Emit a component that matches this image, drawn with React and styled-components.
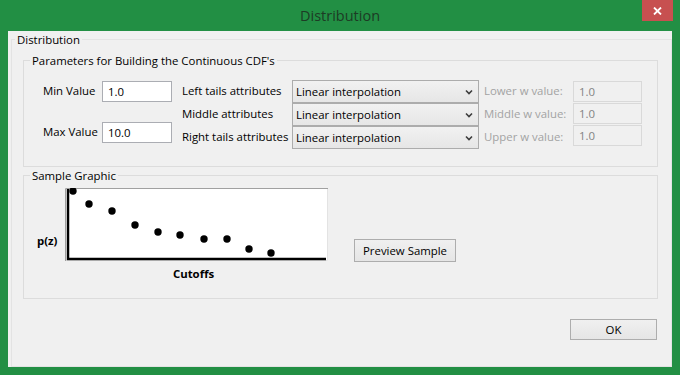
import React from "react";
import styled, { createGlobalStyle } from "styled-components";

const GlobalStyle = createGlobalStyle`
  html, body {
    margin: 0;
    padding: 0;
    background: #228f44;
  }
  body {
    font-family: "Segoe UI", "Open Sans", "Noto Sans", sans-serif;
    font-size: 11.4px;
    color: #000;
  }
`;

const Window = styled.div`
  width: 680px;
  height: 375px;
  background: #228f44;
  display: flex;
  flex-direction: column;
  box-sizing: border-box;
  overflow: hidden;
`;

const TitleBar = styled.div`
  height: 31px;
  flex-shrink: 0;
  display: grid;
  grid-template-columns: 1fr auto 1fr;
`;

const Title = styled.div`
  grid-column: 2;
  font-size: 14.5px;
  line-height: 31px;
  color: #1d3b25;
`;

const CloseButton = styled.div`
  grid-column: 3;
  justify-self: end;
  width: 31px;
  height: 21px;
  margin-right: 7px;
  background: #c75050;
  display: flex;
  align-items: center;
  justify-content: center;
`;

const Client = styled.div`
  flex: 1;
  margin: 0 8px 8px;
  background: #f0f0f0;
  display: flex;
  padding-left: 3px;
  min-height: 0;
`;

const Group = styled.fieldset`
  margin: 0;
  padding: 0;
  min-width: 0;
  border: 1px solid ${(p) => (p.$outer ? "#e3e3e3" : "#dcdcdc")};
  flex: ${(p) => (p.$outer ? 1 : "none")};
`;

const Legend = styled.legend`
  margin-left: ${(p) => p.$offset}px;
  padding: 0 2px;
  line-height: 16px;
  font-size: 11.4px;
  position: relative;
  top: 1px;
`;

const OuterBody = styled.div`
  padding: 5px 13px 0 11px;
  display: flex;
  flex-direction: column;
`;

const ParamBody = styled.div`
  display: flex;
  align-items: flex-start;
  padding: 12px 0 17px 19px;
`;

const MinMaxGrid = styled.div`
  display: grid;
  grid-template-columns: 53px 70px;
  column-gap: 6px;
  row-gap: 20px;
  margin-top: 1px;
`;

const Label = styled.div`
  line-height: ${(p) => p.$h || 20}px;
  white-space: nowrap;
  color: ${(p) => (p.$disabled ? "#a3a3a3" : "#000")};
  padding-left: ${(p) => p.$pad || 0}px;
`;

const TextBox = styled.div`
  box-sizing: border-box;
  width: ${(p) => p.$w}px;
  height: 21px;
  border: 1px solid ${(p) => (p.$disabled ? "#d9d9d9" : "#abadb3")};
  background: ${(p) => (p.$disabled ? "#f0f0f0" : "#fff")};
  color: ${(p) => (p.$disabled ? "#838383" : "#000")};
  padding: 0 5px;
  line-height: 19px;
  margin-top: ${(p) => p.$dy || 0}px;
  align-self: start;
`;

const AttrGrid = styled.div`
  display: grid;
  grid-template-columns: 110px 187px 94px 69px;
  grid-template-rows: repeat(3, 23px);
  margin-left: 10px;
`;

const Select = styled.div`
  box-sizing: border-box;
  width: 187px;
  height: 23px;
  border: 1px solid #acacac;
  background: linear-gradient(#f1f1f1, #e6e6e6);
  display: flex;
  align-items: center;
  justify-content: space-between;
  padding: 0 5px 0 3px;
  line-height: 21px;
`;

const SampleBody = styled.div`
  display: flex;
  align-items: flex-start;
  padding: 0 0 16px 13px;
`;

const AxisLabel = styled.div`
  font-weight: bold;
  line-height: 16px;
  width: 28px;
  margin-top: ${(p) => p.$top}px;
`;

const PlotColumn = styled.div`
  display: flex;
  flex-direction: column;
  margin-top: 5px;
`;

const PlotBox = styled.svg`
  display: block;
  width: 263px;
  height: 73px;
`;

const CutoffsLabel = styled(AxisLabel)`
  width: auto;
  text-align: center;
  padding-right: 6px;
`;

const PushButton = styled.div`
  box-sizing: border-box;
  width: ${(p) => p.$w}px;
  height: ${(p) => p.$h}px;
  border: 1px solid #adadad;
  background: linear-gradient(#f0f0f0, #e5e5e5);
  display: flex;
  align-items: center;
  justify-content: center;
  margin-top: ${(p) => p.$top || 0}px;
  margin-left: ${(p) => p.$left || 0}px;
`;

const Footer = styled.div`
  display: flex;
  justify-content: flex-end;
  padding: 20px 1px 0 0;
`;

const Chevron = () => (
  <svg width="8" height="6" viewBox="0 0 8 6">
    <path d="M1 1.5 L4 4.5 L7 1.5" fill="none" stroke="#3c3c3c" strokeWidth="1.6" />
  </svg>
);

const samples = [
  [8, 3], [24, 16], [47, 23], [70, 37], [93, 44],
  [115, 47], [139, 51], [162, 51], [184, 61], [206, 65],
];

const attributes = [
  { name: "Left tails attributes", w: "Lower w value:", dy: 1 },
  { name: "Middle attributes", w: "Middle w value:", dy: 0 },
  { name: "Right tails attributes", w: "Upper w value:", dy: -1 },
];

export default function App() {
  return (
    <>
      <GlobalStyle />
      <Window>
        <TitleBar>
          <Title>Distribution</Title>
          <CloseButton>
            <svg width="9" height="8" viewBox="0 0 9 8">
              <path d="M1 0.5 L8 7.5 M8 0.5 L1 7.5" stroke="#fff" strokeWidth="1.8" />
            </svg>
          </CloseButton>
        </TitleBar>
        <Client>
          <Group $outer>
            <Legend $offset={3}>Distribution</Legend>
            <OuterBody>
              <Group>
                <Legend $offset={6}>Parameters for Building the Continuous CDF's</Legend>
                <ParamBody>
                  <MinMaxGrid>
                    <Label>Min Value</Label>
                    <TextBox $w={70}>1.0</TextBox>
                    <Label>Max Value</Label>
                    <TextBox $w={70}>10.0</TextBox>
                  </MinMaxGrid>
                  <AttrGrid>
                    {attributes.map((a) => (
                      <React.Fragment key={a.name}>
                        <Label $h={21}>{a.name}</Label>
                        <Select>
                          <span>Linear interpolation</span>
                          <Chevron />
                        </Select>
                        <Label $h={21} $pad={5} $disabled>{a.w}</Label>
                        <TextBox $w={69} $dy={a.dy} $disabled>1.0</TextBox>
                      </React.Fragment>
                    ))}
                  </AttrGrid>
                </ParamBody>
              </Group>
              <Group>
                <Legend $offset={6}>Sample Graphic</Legend>
                <SampleBody>
                  <AxisLabel $top={50}>p(z)</AxisLabel>
                  <PlotColumn>
                    <PlotBox viewBox="0 0 263 73">
                      <rect x="0" y="0" width="263" height="73" fill="#fff" />
                      <path d="M0.5 73 V0.5 H263" fill="none" stroke="#a0a0a0" />
                      <path d="M262.5 1 V72.5 H1" fill="none" stroke="#e3e3e3" />
                      <path d="M3 1 V71 H261" fill="none" stroke="#000" strokeWidth="2.5" />
                      {samples.map(([x, y]) => (
                        <circle key={x} cx={x} cy={y} r="3.7" fill="#000" />
                      ))}
                    </PlotBox>
                    <CutoffsLabel $top={5}>Cutoffs</CutoffsLabel>
                  </PlotColumn>
                  <PushButton $w={102} $h={23} $top={56} $left={26}>Preview Sample</PushButton>
                </SampleBody>
              </Group>
              <Footer>
                <PushButton $w={87} $h={21}>OK</PushButton>
              </Footer>
            </OuterBody>
          </Group>
        </Client>
      </Window>
    </>
  );
}
